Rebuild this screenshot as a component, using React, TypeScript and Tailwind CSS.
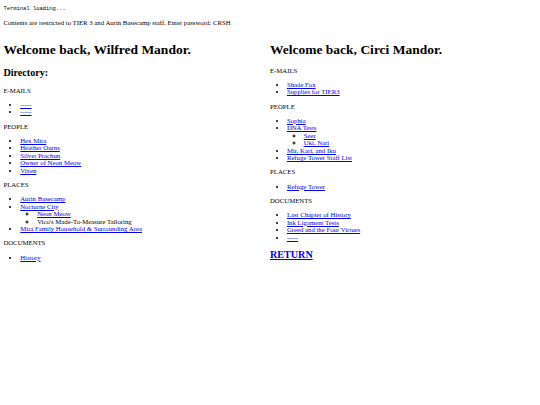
import React from "react";

type Item = { label: string; link?: boolean; children?: Item[] };
type Section = { title: string; items: Item[] };

const left: Section[] = [
  { title: "E-MAILS", items: [{ label: "-----", link: true }, { label: "-----", link: true }] },
  {
    title: "PEOPLE",
    items: [
      { label: "Hex Mira", link: true },
      { label: "Heather Ourns", link: true },
      { label: "Silver Prachun", link: true },
      { label: "Owner of Neon Meow", link: true },
      { label: "Vixen", link: true },
    ],
  },
  {
    title: "PLACES",
    items: [
      { label: "Aurin Basecamp", link: true },
      {
        label: "Nocturne City",
        link: true,
        children: [
          { label: "Neon Meow", link: true },
          { label: "Vico's Made-To-Measure Tailoring" },
        ],
      },
      { label: "Mira Family Household & Surrounding Area", link: true },
    ],
  },
  { title: "DOCUMENTS", items: [{ label: "History", link: true }] },
];

const right: Section[] = [
  {
    title: "E-MAILS",
    items: [
      { label: "Shade Fox", link: true },
      { label: "Supplies for TIER3", link: true },
    ],
  },
  {
    title: "PEOPLE",
    items: [
      { label: "Sophia", link: true },
      {
        label: "DNA Tests",
        link: true,
        children: [
          { label: "Seer", link: true },
          { label: "Uki, Nari", link: true },
        ],
      },
      { label: "Mir, Kari, and Iku", link: true },
      { label: "Refuge Tower Staff List", link: true },
    ],
  },
  { title: "PLACES", items: [{ label: "Refuge Tower", link: true }] },
  {
    title: "DOCUMENTS",
    items: [
      { label: "Last Chapter of History", link: true },
      { label: "Ink Ligament Tests", link: true },
      { label: "Greed and the Four Virtues", link: true },
      { label: "-----", link: true },
    ],
  },
];

function List({ items, nested }: { items: Item[]; nested?: boolean }) {
  return (
    <ul className={nested ? "list-[circle] pl-[2.5em]" : "list-disc pl-[2.5em] my-[1em]"}>
      {items.map((it, i) => (
        <li key={i}>
          {it.link ? (
            <a href="#" className="text-[#0000ee] underline">
              {it.label}
            </a>
          ) : (
            it.label
          )}
          {it.children && <List items={it.children} nested />}
        </li>
      ))}
    </ul>
  );
}

function Column({ name, sections, directory, back }: { name: string; sections: Section[]; directory?: boolean; back?: boolean }) {
  return (
    <div className="w-1/2">
      <h1 className="text-[2em] font-bold my-[0.67em] leading-[1.15]">Welcome back, {name}.</h1>
      {directory && <h2 className="text-[1.5em] font-bold my-[0.83em] leading-[1.15]">Directory:</h2>}
      {sections.map((s, i) => (
        <div key={i}>
          <p className="my-[1em]">{s.title}</p>
          <List items={s.items} />
        </div>
      ))}
      {back && (
        <h2 className="text-[1.5em] font-bold my-[0.83em] leading-[1.15]">
          <a href="#" className="text-[#0000ee] underline">RETURN</a>
        </h2>
      )}
    </div>
  );
}

export default function App() {
  return (
    <div className="min-h-[405px] bg-white text-black text-[6.75px] leading-[1.111] px-[3.375px] py-[0.1px] [font-family:'Liberation_Serif',serif]">
      <p className="mt-[5.6px] mb-[1em] text-[0.8125em] leading-[1.15] [font-family:'Liberation_Mono',monospace]">Terminal loading...</p>
      <p className="my-[1em]">Contents are restricted to TIER 3 and Aurin Basecamp staff. Enter password: CRSH</p>
      <div className="flex">
        <Column name="Wilfred Mandor" sections={left} directory />
        <Column name="Circi Mandor" sections={right} back />
      </div>
    </div>
  );
}
